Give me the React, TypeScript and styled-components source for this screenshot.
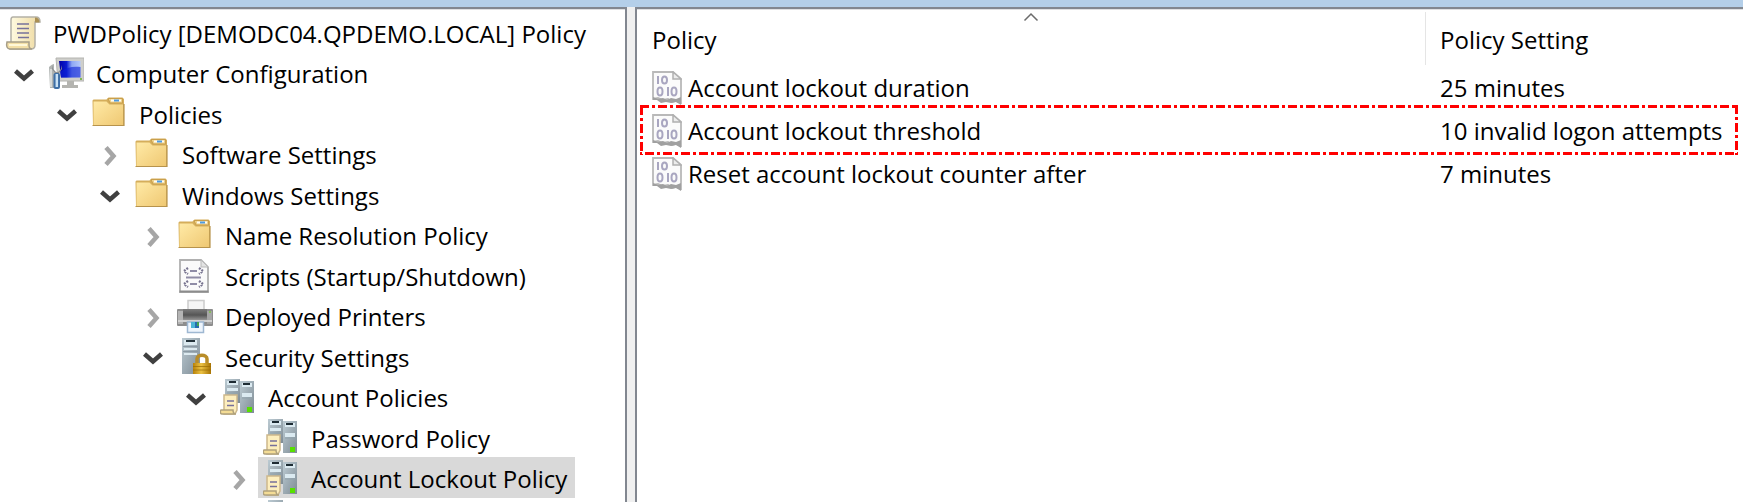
import React from "react";
import styled, { createGlobalStyle } from "styled-components";

const GlobalStyle = createGlobalStyle`
  * { box-sizing: border-box; }
  body {
    margin: 0;
    background: #ffffff;
    color: #000000;
    font-family: "Segoe UI", "Open Sans", "Noto Sans", sans-serif;
    font-size: 24px;
    line-height: 36px;
  }
  button {
    font: inherit;
    color: inherit;
    border: 0;
    background: none;
    padding: 0;
    cursor: pointer;
  }
  svg { display: block; flex: none; }
`;

const Window = styled.div`
  display: flex;
  flex-direction: column;
  height: 100vh;
  overflow: hidden;
`;

const TitleStrip = styled.header`
  flex: none;
  height: 7px;
  background: #b4cfe9;
`;

const Panes = styled.main`
  flex: 1;
  display: flex;
  gap: 8px;
  min-height: 0;
  background: #f0f0f0;
`;

const Pane = styled.section`
  overflow: hidden;
  background: #ffffff;
  border: 0 solid #828790;
  border-top-width: 2px;
  box-shadow: inset 0 1px 0 #dfe0e2;
`;

const TreePane = styled(Pane)`
  flex: none;
  width: 627px;
  border-right-width: 2px;
`;

const ListPane = styled(Pane)`
  flex: 1;
  border-left-width: 2px;
`;

const Tree = styled.ul`
  list-style: none;
  margin: 0;
  padding: 3px 0 0;
`;

const TreeRow = styled.li<{ $indent: number }>`
  display: flex;
  height: 40px;
  padding-left: ${(p) => p.$indent * 43}px;

  &:nth-child(even) {
    height: 41px;
  }
`;

const Toggle = styled.button`
  display: flex;
  flex: none;
  width: 43px;
  padding: 4px 0 0 5px;
  align-items: center;
  justify-content: center;
`;

const NodeButton = styled.button<{ $selected?: boolean }>`
  display: flex;
  align-items: center;
  gap: 12px;
  padding: 0 8px 0 5px;
  white-space: nowrap;
  background: ${(p) => (p.$selected ? "#d9d9d9" : "transparent")};
`;

const NodeLabel = styled.span`
  padding-top: 3px;
`;

const PolicyTable = styled.table`
  width: 100%;
  table-layout: fixed;
  border-collapse: collapse;
  white-space: nowrap;
`;

const HeadCell = styled.th<{ $setting?: boolean }>`
  position: relative;
  width: ${(p) => (p.$setting ? "318px" : "auto")};
  height: 57px;
  padding: 5px 0 0 15px;
  font-weight: 400;
  text-align: left;
  background: ${(p) => (p.$setting ? "linear-gradient(#e5e5e5, #e5e5e5) 0 3px / 1px 53px no-repeat" : "none")};
`;

const SortMark = styled.span`
  position: absolute;
  top: 3px;
  left: 0;
  right: 0;
  display: flex;
  justify-content: center;
`;

const PolicyRow = styled.tr`
  position: relative;
  height: 43px;
`;

const Cell = styled.td`
  padding: 0 0 0 15px;
`;

const PolicyName = styled.div`
  display: flex;
  align-items: center;
  gap: 6px;
`;

const Highlight = styled.svg`
  position: absolute;
  top: -4px;
  left: 3px;
  width: calc(100% - 8px);
  height: 50px;
  overflow: hidden;
  pointer-events: none;
`;

const Defs = () => (
  <svg width="0" height="0" aria-hidden="true" style={{ position: "absolute" }}>
    <defs>
      <linearGradient id="folder" x1="0" y1="0" x2="1" y2="1">
        <stop offset="0" stopColor="#ffeaa6" />
        <stop offset="1" stopColor="#efc873" />
      </linearGradient>
      <linearGradient id="screen" x1="0" y1="0" x2="1" y2="0">
        <stop offset="0" stopColor="#0000a4" />
        <stop offset="0.35" stopColor="#0a1cd0" />
        <stop offset="0.6" stopColor="#8fa8f4" />
        <stop offset="1" stopColor="#b4c8fa" />
      </linearGradient>
      <linearGradient id="paper" x1="0" y1="0" x2="1" y2="0">
        <stop offset="0" stopColor="#fffbe2" />
        <stop offset="1" stopColor="#eed9a0" />
      </linearGradient>
      <linearGradient id="steel" x1="0" y1="0" x2="1" y2="1">
        <stop offset="0" stopColor="#bccbd3" />
        <stop offset="1" stopColor="#7f8c95" />
      </linearGradient>
      <linearGradient id="printer" x1="0" y1="0" x2="0" y2="1">
        <stop offset="0" stopColor="#7c7c7c" />
        <stop offset="0.5" stopColor="#555555" />
        <stop offset="1" stopColor="#a2a2a2" />
      </linearGradient>
      <linearGradient id="brass" x1="0" y1="0" x2="1" y2="0">
        <stop offset="0" stopColor="#b8820a" />
        <stop offset="0.45" stopColor="#ecc244" />
        <stop offset="1" stopColor="#a87404" />
      </linearGradient>
    </defs>
  </svg>
);

const Icon = ({ children }: { children: React.ReactNode }) => (
  <svg width="36" height="36" viewBox="0 0 36 36" aria-hidden="true">
    {children}
  </svg>
);

const ScrollIcon = () => (
  <Icon>
    <path d="M8 3h23c3 0 4 2 4 5h-5v23c0 3-2 4-4 4H5l1-7V6c0-2 1-3 2-3z" fill="url(#paper)" stroke="#b4b1a6" strokeWidth="1.5" />
    <path d="M30 3.5c3 0 4.500 1.500 4.500 5H30z" fill="#a98f55" />
    <path d="M2 28h22v3c0 2 1 4 3 4H5c-3 0-4-3-3-7z" fill="#f3dfa6" stroke="#a69e88" strokeWidth="1.500" />
    <path d="M4 31h18" stroke="#fff8d8" strokeWidth="2" />
    <path d="M12 10h12M12 14.500h12M12 19h12M13 23.500h11" stroke="#77729a" strokeWidth="1.700" />
  </Icon>
);

const ComputerIcon = () => (
  <Icon>
    <path d="M8 3h28v23H10z" fill="#cfcfcb" stroke="#b4b4b0" />
    <path d="M11 6h21.500v16.500H13z" fill="url(#screen)" />
    <path d="M12 17c6-5 14-6 20.500-5v10.500H13z" fill="#0b1fd6" opacity="0.600" />
    <path d="M32 24h2" stroke="#68b030" strokeWidth="1.500" />
    <path d="M19 26h7v4h4v3H14v-3h5z" fill="#b4b4b0" />
    <path d="M1 12c2-2 4-3 5-3v6l2 3v15H2z" fill="#b0b4b2" />
    <path d="M3 14v18" stroke="#d7dad8" strokeWidth="2" />
    <path d="M5 10v4l3 3h2l3-3v-4l1 4-3 4v2H7v-2l-3-4z" fill="#8a8e90" />
    <rect x="5.500" y="18" width="6.500" height="16" rx="2" fill="#3e6fa6" />
    <path d="M8.800 19v13" stroke="#c9e2f5" strokeWidth="2.500" />
  </Icon>
);

const FolderIcon = () => (
  <Icon>
    <path d="M1.500 5.500l1-1h13l2-2h14l1.500 1.500V31h-31z" fill="#d5ae5b" />
    <path d="M2.500 6.500h13l3 3H32v20.500H2.500z" fill="url(#folder)" />
    <path d="M17 3.500h14.500V8H19z" fill="#eed28b" stroke="#c99f4c" />
    <path d="M20 4.500h10v2H20z" fill="#fffdf4" />
    <path d="M23 4.500h5v2h-5z" fill="#4e9be0" />
    <path d="M1.500 30.500H33V9" fill="none" stroke="#b7934c" strokeWidth="1.200" />
  </Icon>
);

const ScriptIcon = () => (
  <Icon>
    <path d="M3 3h21l7 7v25H3z" fill="#fafafa" stroke="#b0b0b0" strokeWidth="1.800" />
    <path d="M24 3v7h7z" fill="#e3e3e3" stroke="#b8b8b8" />
    <path d="M2.500 34.500h29" stroke="#8c8c8c" strokeWidth="2" />
    <g fill="none" stroke="#77738f" strokeWidth="2.200" strokeDasharray="2 1">
      <path d="M11 11l-4 3 4 3M22 11l4 3-4 3M11 24l-4 3 4 3M22 24l4 3-4 3" />
    </g>
    <path d="M13 14h7M13 27h7M9 20.500h15" stroke="#8f8ca6" strokeWidth="1.800" />
  </Icon>
);

const PrinterIcon = () => (
  <Icon>
    <path d="M11 2.500h16V12H11z" fill="#f5f5f5" stroke="#cccccc" strokeWidth="1.500" />
    <rect x="0" y="11" width="36" height="17" rx="1" fill="#8d8d8d" />
    <rect x="1" y="13" width="5" height="13" fill="#b4b4b4" />
    <rect x="30" y="13" width="5" height="13" fill="#a6a6a6" />
    <rect x="6" y="11" width="24" height="12" fill="url(#printer)" />
    <path d="M1 23h34" stroke="#d2d2d2" strokeWidth="2" />
    <path d="M32 14h2" stroke="#7ac143" strokeWidth="1.500" />
    <path d="M10.500 24h16v10.500h-16z" fill="#eef5fc" stroke="#9fb8d2" strokeWidth="1.500" />
    <path d="M14 24h4v6h-4z" fill="#4bb5d6" />
    <path d="M18 24h4v6h-4z" fill="#276cb0" />
    <path d="M20 24h2v4h-2z" fill="#45a453" />
  </Icon>
);

const SecurityIcon = () => (
  <Icon>
    <path d="M5 0h18v36H5z" fill="url(#steel)" />
    <path d="M7 2h13v5H7zM7 10h13v2H7zM7 15h13v2H7z" fill="#dceaf0" />
    <path d="M9 3h9" stroke="#24333a" strokeWidth="2" />
    <path d="M6 8.500h15M6 13.500h15" stroke="#8b9aa4" />
    <path d="M20 26v-5c0-5 10-5 10 0v5" fill="none" stroke="#b98d28" strokeWidth="3.500" />
    <path d="M16 25h18v11H16z" fill="url(#brass)" />
    <path d="M16 28.500h18M16 32h18" stroke="#9a6c04" opacity="0.700" />
  </Icon>
);

const PolicyGroupIcon = () => (
  <Icon>
    <path d="M5 0h15v24H5z" fill="url(#steel)" />
    <path d="M20 2h14v32H20z" fill="url(#steel)" />
    <path d="M7 2h11v4H7zM7 9h11v3H7zM22 4h10v4H22zM22 14h10v4H22z" fill="#dbeaf1" />
    <path d="M9 3h7M23 5h7" stroke="#1d2b33" strokeWidth="2" />
    <path d="M7 14h11M22 19h10" stroke="#91a3ac" />
    <rect x="27" y="28" width="5" height="5" fill="#57e000" />
    <path d="M4 16h13v15l-2 4H4z" fill="#fdeebd" stroke="#cdb88c" strokeWidth="1.500" />
    <path d="M1 31h12c0 2 1 4 3 4H2c-2 0-2-3-1-4z" fill="#f4dc95" stroke="#b0a17c" strokeWidth="1.500" />
    <path d="M7 22h7M7 26.500h7" stroke="#77709a" strokeWidth="1.700" />
  </Icon>
);

const BinaryIcon = () => (
  <svg width="30" height="34" viewBox="0 0 30 34" aria-hidden="true">
    <path d="M1 1h20l8 7v24l-5-2-4 1-4-3-5 1-5-2-5 1z" fill="#fbfbfb" stroke="#b9b9b9" strokeWidth="1.800" />
    <path d="M21 1v7h8z" fill="#ececec" stroke="#b0b0b0" strokeWidth="1.500" />
    <path d="M1 26l5 2 5-1 4 2 4-2 5 1 5-2v8l-5-3-5 1-5-1-5 1-4-3H1z" fill="#a0a0a0" />
    <g fill="none" stroke="#a9a6c0" strokeWidth="2">
      <path d="M6 5v8M16 16v9" />
      <ellipse cx="12.500" cy="9" rx="2.500" ry="3.500" />
      <ellipse cx="8" cy="20.500" rx="2.500" ry="4" />
      <ellipse cx="22" cy="20.500" rx="2.500" ry="4" />
    </g>
  </svg>
);

const Chevron = ({ open }: { open: boolean }) => (
  <svg width="24" height="24" viewBox="0 0 24 24" fill="none" strokeWidth="4.500" aria-hidden="true">
    {open ? <path d="M3.500 8l8.500 7.500L20.500 8" stroke="#404040" /> : <path d="M8 3.500l7.500 8.500L8 20.500" stroke="#a6a6a6" />}
  </svg>
);

type Node = { label: string; level: number; icon: React.FC; open?: boolean; selected?: boolean };

const nodes: Node[] = [
  { label: "PWDPolicy [DEMODC04.QPDEMO.LOCAL] Policy", level: 0, icon: ScrollIcon },
  { label: "Computer Configuration", level: 1, icon: ComputerIcon, open: true },
  { label: "Policies", level: 2, icon: FolderIcon, open: true },
  { label: "Software Settings", level: 3, icon: FolderIcon, open: false },
  { label: "Windows Settings", level: 3, icon: FolderIcon, open: true },
  { label: "Name Resolution Policy", level: 4, icon: FolderIcon, open: false },
  { label: "Scripts (Startup/Shutdown)", level: 4, icon: ScriptIcon },
  { label: "Deployed Printers", level: 4, icon: PrinterIcon, open: false },
  { label: "Security Settings", level: 4, icon: SecurityIcon, open: true },
  { label: "Account Policies", level: 5, icon: PolicyGroupIcon, open: true },
  { label: "Password Policy", level: 6, icon: PolicyGroupIcon },
  { label: "Account Lockout Policy", level: 6, icon: PolicyGroupIcon, open: false, selected: true },
  { label: "", level: 6, icon: PolicyGroupIcon },
];

const policies = [
  { name: "Account lockout duration", setting: "25 minutes" },
  { name: "Account lockout threshold", setting: "10 invalid logon attempts", marked: true },
  { name: "Reset account lockout counter after", setting: "7 minutes" },
];

const TreeNode = ({ node }: { node: Node }) => {
  const expandable = node.open !== undefined;
  const NodeIcon = node.icon;
  return (
    <TreeRow $indent={expandable ? node.level - 1 : node.level}>
      {expandable && (
        <Toggle aria-label={node.label} aria-expanded={node.open}>
          <Chevron open={!!node.open} />
        </Toggle>
      )}
      <NodeButton $selected={node.selected}>
        <NodeIcon />
        <NodeLabel>{node.label}</NodeLabel>
      </NodeButton>
    </TreeRow>
  );
};

export default function App() {
  return (
    <Window>
      <GlobalStyle />
      <Defs />
      <TitleStrip />
      <Panes>
        <TreePane>
          <Tree>
            {nodes.map((node, i) => (
              <TreeNode key={i} node={node} />
            ))}
          </Tree>
        </TreePane>
        <ListPane>
          <PolicyTable>
            <thead>
              <tr>
                <HeadCell aria-sort="ascending">
                  <SortMark>
                    <svg width="16" height="10" viewBox="0 0 16 10" fill="none" stroke="#6b6b6b" strokeWidth="1.500">
                      <path d="M1.500 8.500L8 2l6.500 6.500" />
                    </svg>
                  </SortMark>
                  Policy
                </HeadCell>
                <HeadCell $setting>Policy Setting</HeadCell>
              </tr>
            </thead>
            <tbody>
              {policies.map((policy) => (
                <PolicyRow key={policy.name}>
                  <Cell>
                    <PolicyName>
                      <BinaryIcon />
                      {policy.name}
                    </PolicyName>
                    {policy.marked && (
                      <Highlight aria-hidden="true">
                        <rect width="100%" height="100%" fill="none" stroke="#ff0000" strokeWidth="6" strokeDasharray="9 3 3 3" />
                      </Highlight>
                    )}
                  </Cell>
                  <Cell>{policy.setting}</Cell>
                </PolicyRow>
              ))}
            </tbody>
          </PolicyTable>
        </ListPane>
      </Panes>
    </Window>
  );
}
